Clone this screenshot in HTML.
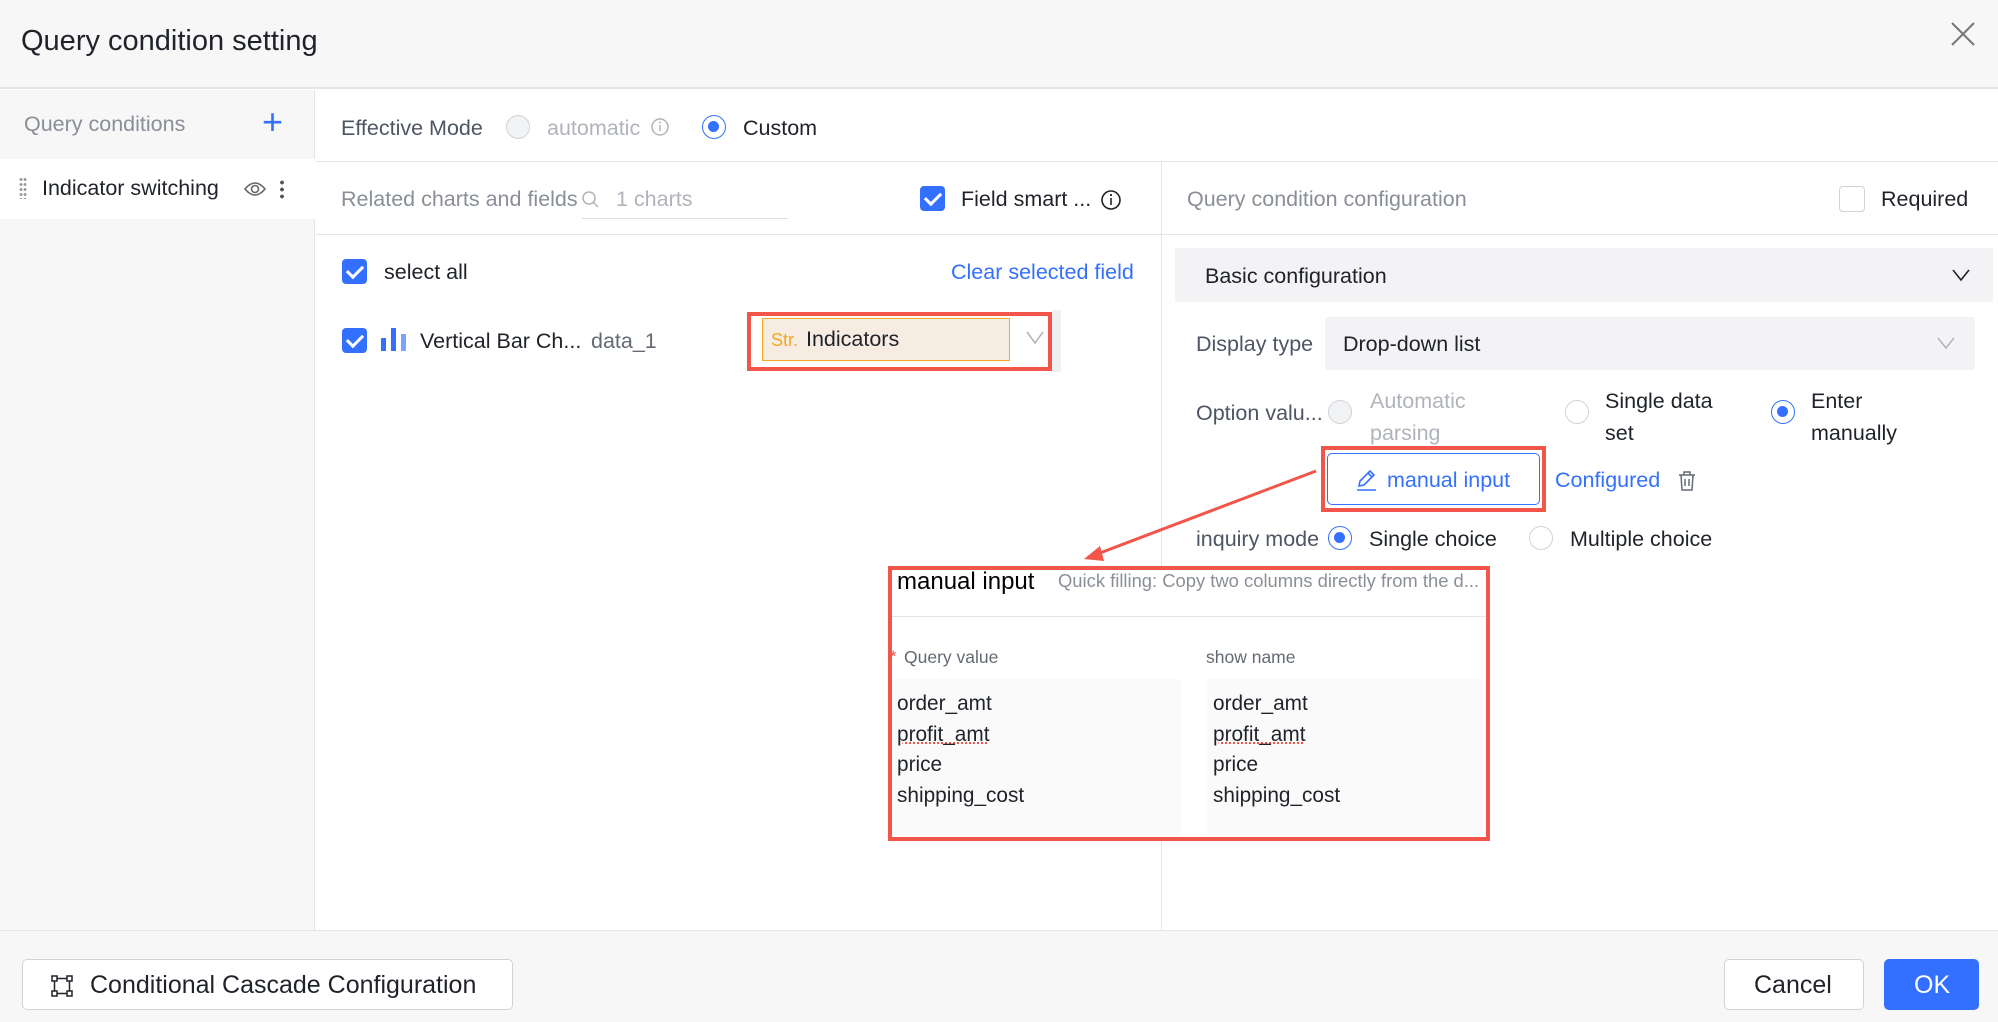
<!DOCTYPE html>
<html><head><meta charset="utf-8"><style>
*{box-sizing:border-box;margin:0;padding:0}
body{width:1998px;height:1022px;position:relative;background:#fff;font-family:"Liberation Sans",Arial,sans-serif;color:#1f2329;overflow:hidden;font-size:21.5px}
.a{position:absolute;white-space:nowrap}
.cb{position:absolute;width:25px;height:25px;border-radius:4px;background:#3370ff}
.cb:after{content:"";position:absolute;left:8px;top:3px;width:7px;height:13px;border:solid #fff;border-width:0 3px 3px 0;transform:rotate(45deg)}
.rd{position:absolute;width:24px;height:24px;border-radius:50%;border:1.5px solid #d0d3d6;background:#fff}
.rd.on{border-color:#3370ff}
.rd.on:after{content:"";position:absolute;left:5px;top:5px;width:11px;height:11px;border-radius:50%;background:#3370ff}
.rd.dis{background:#f2f3f5}
</style></head><body>
<div class="a" style="left:0;top:0;width:1998px;height:89px;background:#f7f7f8;border-bottom:2px solid #e4e5e7"></div>
<div class="a" style="left:21px;top:25px;font-size:29px;color:#1f2329">Query condition setting</div>
<svg class="a" style="left:1950px;top:21px" width="26" height="26" viewBox="0 0 26 26"><path d="M2 2L24 24M24 2L2 24" stroke="#777" stroke-width="2"/></svg>
<div class="a" style="left:0;top:90px;width:315px;height:840px;background:#f7f7f8;border-right:1px solid #e4e5e7"></div>
<div class="a" style="left:24px;top:112px;color:#8a8f97">Query conditions</div>
<div class="a" style="left:262px;top:104px;font-size:36px;color:#3370ff;line-height:36px">+</div>
<div class="a" style="left:0;top:159px;width:315px;height:60px;background:#fff"></div>
<div class="a" style="left:19px;top:177px;width:8px;height:22px;background:radial-gradient(circle,#999 1.3px,transparent 1.6px) 0 0/4px 5px"></div>
<div class="a" style="left:42px;top:176px;color:#1f2329">Indicator switching</div>
<svg class="a" style="left:244px;top:179px" width="22" height="20" viewBox="0 0 22 20"><path d="M1 10Q11 -2 21 10Q11 22 1 10Z" fill="none" stroke="#666" stroke-width="1.6"/><circle cx="11" cy="10" r="3.5" fill="none" stroke="#666" stroke-width="1.6"/></svg>
<div class="a" style="left:280px;top:179px;width:4px;height:20px;background:radial-gradient(circle,#555 1.8px,transparent 2px) 0 0/4px 7px"></div>
<div class="a" style="left:316px;top:161px;width:1682px;height:1px;background:#e4e5e7"></div>
<div class="a" style="left:341px;top:116px;color:#4e5563">Effective Mode</div>
<div class="rd dis" style="left:506px;top:115px"></div>
<div class="a" style="left:547px;top:116px;color:#b0b4ba">automatic</div>
<svg class="a" style="left:650px;top:117px" width="20" height="20"><circle cx="10" cy="10" r="8" fill="none" stroke="#b0b4ba" stroke-width="1.5"/><path d="M10 8v6" stroke="#b0b4ba" stroke-width="1.5"/><circle cx="10" cy="5.5" r="1" fill="#b0b4ba"/></svg>
<div class="rd on" style="left:702px;top:115px"></div>
<div class="a" style="left:743px;top:116px;color:#1f2329">Custom</div>
<div class="a" style="left:1161px;top:162px;width:1px;height:768px;background:#e4e5e7"></div>
<div class="a" style="left:316px;top:234px;width:845px;height:1px;background:#e4e5e7"></div>
<div class="a" style="left:341px;top:187px;color:#8a8f97">Related charts and fields</div>
<svg class="a" style="left:581px;top:190px" width="20" height="20"><circle cx="8" cy="8" r="6" fill="none" stroke="#b0b4ba" stroke-width="1.5"/><path d="M12.5 12.5L17 17" stroke="#b0b4ba" stroke-width="1.5"/></svg>
<div class="a" style="left:616px;top:187px;color:#b0b4ba">1 charts</div>
<div class="a" style="left:582px;top:218px;width:206px;height:1px;background:#dcdde0"></div>
<div class="cb" style="left:920px;top:186px"></div>
<div class="a" style="left:961px;top:187px;color:#1f2329">Field smart ...</div>
<svg class="a" style="left:1100px;top:189px" width="22" height="22"><circle cx="11" cy="11" r="9" fill="none" stroke="#1f2329" stroke-width="1.6"/><path d="M11 9v7" stroke="#1f2329" stroke-width="1.6"/><circle cx="11" cy="6" r="1.1" fill="#1f2329"/></svg>
<div class="cb" style="left:342px;top:259px"></div>
<div class="a" style="left:384px;top:260px;color:#1f2329">select all</div>
<div class="a" style="left:951px;top:260px;color:#3370ff">Clear selected field</div>
<div class="cb" style="left:342px;top:328px"></div>
<svg class="a" style="left:380px;top:326px" width="30" height="26"><rect x="1" y="12" width="5" height="13" fill="#3370ff"/><rect x="11" y="2" width="5" height="23" fill="#3370ff"/><rect x="21" y="8" width="5" height="17" fill="#7aa2ff"/></svg>
<div class="a" style="left:420px;top:329px;color:#1f2329">Vertical Bar Ch...</div>
<div class="a" style="left:591px;top:329px;color:#646a73">data_1</div>
<div class="a" style="left:1052px;top:310px;width:9px;height:62px;background:#f0f0f2"></div>
<div class="a" style="left:747px;top:312px;width:305px;height:59px;border:4px solid #f2554a"></div>
<div class="a" style="left:762px;top:318px;width:248px;height:43px;background:#f7ece2;border:1.5px solid #f5a623"></div>
<div class="a" style="left:771px;top:330px;font-size:18px;color:#f5a623">Str.</div>
<div class="a" style="left:806px;top:327px;color:#1f2329">Indicators</div>
<svg class="a" style="left:1026px;top:331px" width="18" height="14"><path d="M1 1L9 12L17 1" fill="none" stroke="#b0b4ba" stroke-width="1.5"/></svg>
<div class="a" style="left:1161px;top:234px;width:837px;height:1px;background:#e4e5e7"></div>
<div class="a" style="left:1187px;top:187px;color:#8a8f97">Query condition configuration</div>
<div class="a" style="left:1839px;top:186px;width:26px;height:26px;border:1.5px solid #d0d3d6;border-radius:4px"></div>
<div class="a" style="left:1881px;top:187px;color:#1f2329">Required</div>
<div class="a" style="left:1175px;top:248px;width:818px;height:54px;background:#f3f3f5"></div>
<div class="a" style="left:1205px;top:264px;color:#1f2329">Basic configuration</div>
<svg class="a" style="left:1952px;top:269px" width="18" height="13"><path d="M1 1L9 11L17 1" fill="none" stroke="#1f2329" stroke-width="1.6"/></svg>
<div class="a" style="left:1196px;top:332px;color:#4e5563">Display type</div>
<div class="a" style="left:1325px;top:317px;width:650px;height:53px;background:#f3f3f5;border-radius:3px"></div>
<div class="a" style="left:1343px;top:332px;color:#1f2329">Drop-down list</div>
<svg class="a" style="left:1937px;top:337px" width="18" height="13"><path d="M1 1L9 11L17 1" fill="none" stroke="#b0b4ba" stroke-width="1.5"/></svg>
<div class="a" style="left:1196px;top:401px;color:#4e5563">Option valu...</div>
<div class="rd dis" style="left:1328px;top:400px"></div>
<div class="a" style="left:1370px;top:385px;color:#b0b4ba;line-height:32px">Automatic<br>parsing</div>
<div class="rd" style="left:1565px;top:400px"></div>
<div class="a" style="left:1605px;top:385px;color:#1f2329;line-height:32px">Single data<br>set</div>
<div class="rd on" style="left:1771px;top:400px"></div>
<div class="a" style="left:1811px;top:385px;color:#1f2329;line-height:32px">Enter<br>manually</div>
<div class="a" style="left:1321px;top:446px;width:225px;height:66px;border:4px solid #f2554a"></div>
<div class="a" style="left:1327px;top:453px;width:213px;height:52px;border:1.5px solid #3370ff;border-radius:5px;background:#fff"></div>
<svg class="a" style="left:1356px;top:469px" width="22" height="22"><path d="M3 17L4 12L14 2L18 6L8 16Z M12 4L16 8 M1 21H20" fill="none" stroke="#3370ff" stroke-width="1.6"/></svg>
<div class="a" style="left:1387px;top:468px;color:#3370ff">manual input</div>
<div class="a" style="left:1555px;top:468px;color:#3370ff">Configured</div>
<svg class="a" style="left:1677px;top:470px" width="20" height="22"><path d="M2 5H18M7 5V2H13V5M4 5L5 20H15L16 5M8 9V16M12 9V16" fill="none" stroke="#646a73" stroke-width="1.5"/></svg>
<div class="a" style="left:1196px;top:527px;color:#4e5563">inquiry mode</div>
<div class="rd on" style="left:1328px;top:526px"></div>
<div class="a" style="left:1369px;top:527px;color:#1f2329">Single choice</div>
<div class="rd" style="left:1529px;top:526px"></div>
<div class="a" style="left:1570px;top:527px;color:#1f2329">Multiple choice</div>
<svg class="a" style="left:0;top:0" width="1998" height="1022"><path d="M1316 471L1092 556" stroke="#f2554a" stroke-width="3"/><path d="M1084 559L1100 546L1104 561Z" fill="#f2554a"/></svg>
<div class="a" style="left:888px;top:566px;width:602px;height:275px;background:#fff;border:4px solid #f2554a"></div>
<div class="a" style="left:892px;top:616px;width:594px;height:1px;background:#e4e5e7"></div>
<div class="a" style="left:897px;top:567px;font-size:24px;color:#000;line-height:30px">manual input</div>
<div class="a" style="left:1058px;top:570px;font-size:18.4px;color:#8a8f97">Quick filling: Copy two columns directly from the d...</div>
<div class="a" style="left:890px;top:647px;font-size:17px;color:#f2554a">*</div>
<div class="a" style="left:904px;top:647px;font-size:17.5px;color:#646a73">Query value</div>
<div class="a" style="left:1206px;top:647px;font-size:17.5px;color:#646a73">show name</div>
<div class="a" style="left:892px;top:679px;width:289px;height:156px;background:#fafafa"></div>
<div class="a" style="left:1207px;top:679px;width:275px;height:156px;background:#fafafa"></div>
<div class="a" style="left:897px;top:689px;font-size:20.8px;line-height:30.5px;color:#1f2329">order_amt<br><span style="text-decoration:underline dotted #f2554a">profit_amt</span><br>price<br>shipping_cost</div>
<div class="a" style="left:1213px;top:689px;font-size:20.8px;line-height:30.5px;color:#1f2329">order_amt<br><span style="text-decoration:underline dotted #f2554a">profit_amt</span><br>price<br>shipping_cost</div>
<div class="a" style="left:0;top:930px;width:1998px;height:92px;background:#f7f7f8;border-top:1px solid #e4e5e7"></div>
<div class="a" style="left:22px;top:959px;width:491px;height:51px;background:#fff;border:1.5px solid #d0d3d6;border-radius:5px"></div>
<svg class="a" style="left:50px;top:974px" width="24" height="24"><rect x="2" y="2" width="5" height="5" fill="none" stroke="#1f2329" stroke-width="1.5"/><rect x="17" y="2" width="5" height="5" fill="none" stroke="#1f2329" stroke-width="1.5"/><rect x="2" y="17" width="5" height="5" fill="none" stroke="#1f2329" stroke-width="1.5"/><rect x="17" y="17" width="5" height="5" fill="none" stroke="#1f2329" stroke-width="1.5"/><path d="M7 4.5H17M4.5 7V17M19.5 7V17M7 19.5H17" stroke="#1f2329" stroke-width="1.5"/></svg>
<div class="a" style="left:90px;top:971px;font-size:25px;color:#1f2329">Conditional Cascade Configuration</div>
<div class="a" style="left:1724px;top:959px;width:140px;height:51px;background:#fff;border:1.5px solid #d0d3d6;border-radius:5px"></div>
<div class="a" style="left:1754px;top:971px;font-size:25px;color:#1f2329">Cancel</div>
<div class="a" style="left:1884px;top:959px;width:95px;height:51px;background:#3370ff;border-radius:5px"></div>
<div class="a" style="left:1914px;top:971px;font-size:25px;color:#fff">OK</div>
</body></html>
